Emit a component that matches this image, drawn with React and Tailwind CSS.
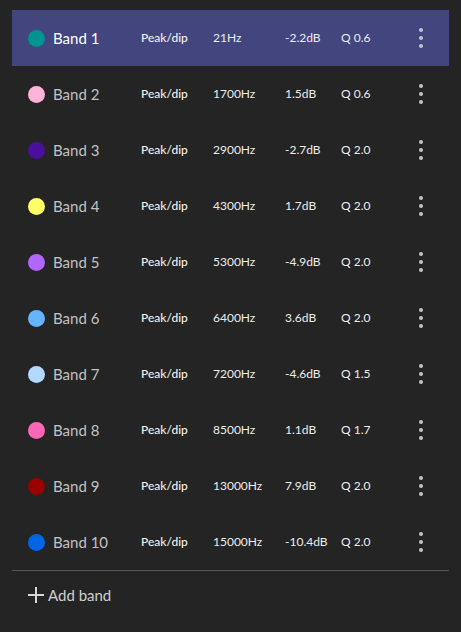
import React, { useState } from 'react';

const bands = [
  { name: 'Band 1', color: '#009490', freq: '21Hz', gain: '-2.2dB', q: 'Q 0.6' },
  { name: 'Band 2', color: '#ffb3d9', freq: '1700Hz', gain: '1.5dB', q: 'Q 0.6' },
  { name: 'Band 3', color: '#4b0f9e', freq: '2900Hz', gain: '-2.7dB', q: 'Q 2.0' },
  { name: 'Band 4', color: '#ffff66', freq: '4300Hz', gain: '1.7dB', q: 'Q 2.0' },
  { name: 'Band 5', color: '#b266ff', freq: '5300Hz', gain: '-4.9dB', q: 'Q 2.0' },
  { name: 'Band 6', color: '#66b3ff', freq: '6400Hz', gain: '3.6dB', q: 'Q 2.0' },
  { name: 'Band 7', color: '#b3d9ff', freq: '7200Hz', gain: '-4.6dB', q: 'Q 1.5' },
  { name: 'Band 8', color: '#ff66b3', freq: '8500Hz', gain: '1.1dB', q: 'Q 1.7' },
  { name: 'Band 9', color: '#990000', freq: '13000Hz', gain: '7.9dB', q: 'Q 2.0' },
  { name: 'Band 10', color: '#0066e6', freq: '15000Hz', gain: '-10.4dB', q: 'Q 2.0' },
];

const MoreDots = () => (
  <div className="flex flex-col items-center gap-[4px]">
    <span className="w-[4px] h-[4px] rounded-full bg-[#c4c4cc]" />
    <span className="w-[4px] h-[4px] rounded-full bg-[#c4c4cc]" />
    <span className="w-[4px] h-[4px] rounded-full bg-[#c4c4cc]" />
  </div>
);

const App = () => {
  const [selected, setSelected] = useState(0);

  return (
    <div
      className="w-[461px] h-[632px] bg-[#242424] pt-[10px] px-[12px]"
      style={{ fontFamily: 'Lato, "Noto Sans", sans-serif' }}
    >
      <div className="flex flex-col">
        {bands.map((b, i) => (
          <div
            key={b.name}
            onClick={() => setSelected(i)}
            className={`h-[56px] flex items-center pl-[16px] cursor-pointer ${
              selected === i ? 'bg-[#43457f]' : ''
            }`}
          >
            <span
              className="w-[17px] h-[17px] rounded-full shrink-0"
              style={{ backgroundColor: b.color }}
            />
            <span
              className={`ml-[8px] w-[88px] text-[15px] ${
                selected === i ? 'text-white' : 'text-[#c2c2c2]'
              }`}
            >
              {b.name}
            </span>
            <span className="w-[72px] text-[12px] font-medium text-[#f0f0f0]">Peak/dip</span>
            <span className="w-[72px] text-[12px] text-[#ececec]">{b.freq}</span>
            <span className="w-[56px] text-[12px] text-[#ececec]">{b.gain}</span>
            <span className="w-[78px] text-[12px] text-[#ececec]">{b.q}</span>
            <MoreDots />
          </div>
        ))}
      </div>

      <div className="border-t border-[#555555]" />

      <button className="h-[48px] flex items-center pl-[16px] gap-[4px] text-[#cfcfcf] text-[15px]">
        <svg width="16" height="16" viewBox="0 0 16 16">
          <path d="M8 0v16M0 8h16" stroke="#d6d6d6" strokeWidth="2" />
        </svg>
        Add band
      </button>
    </div>
  );
};

export default App;
